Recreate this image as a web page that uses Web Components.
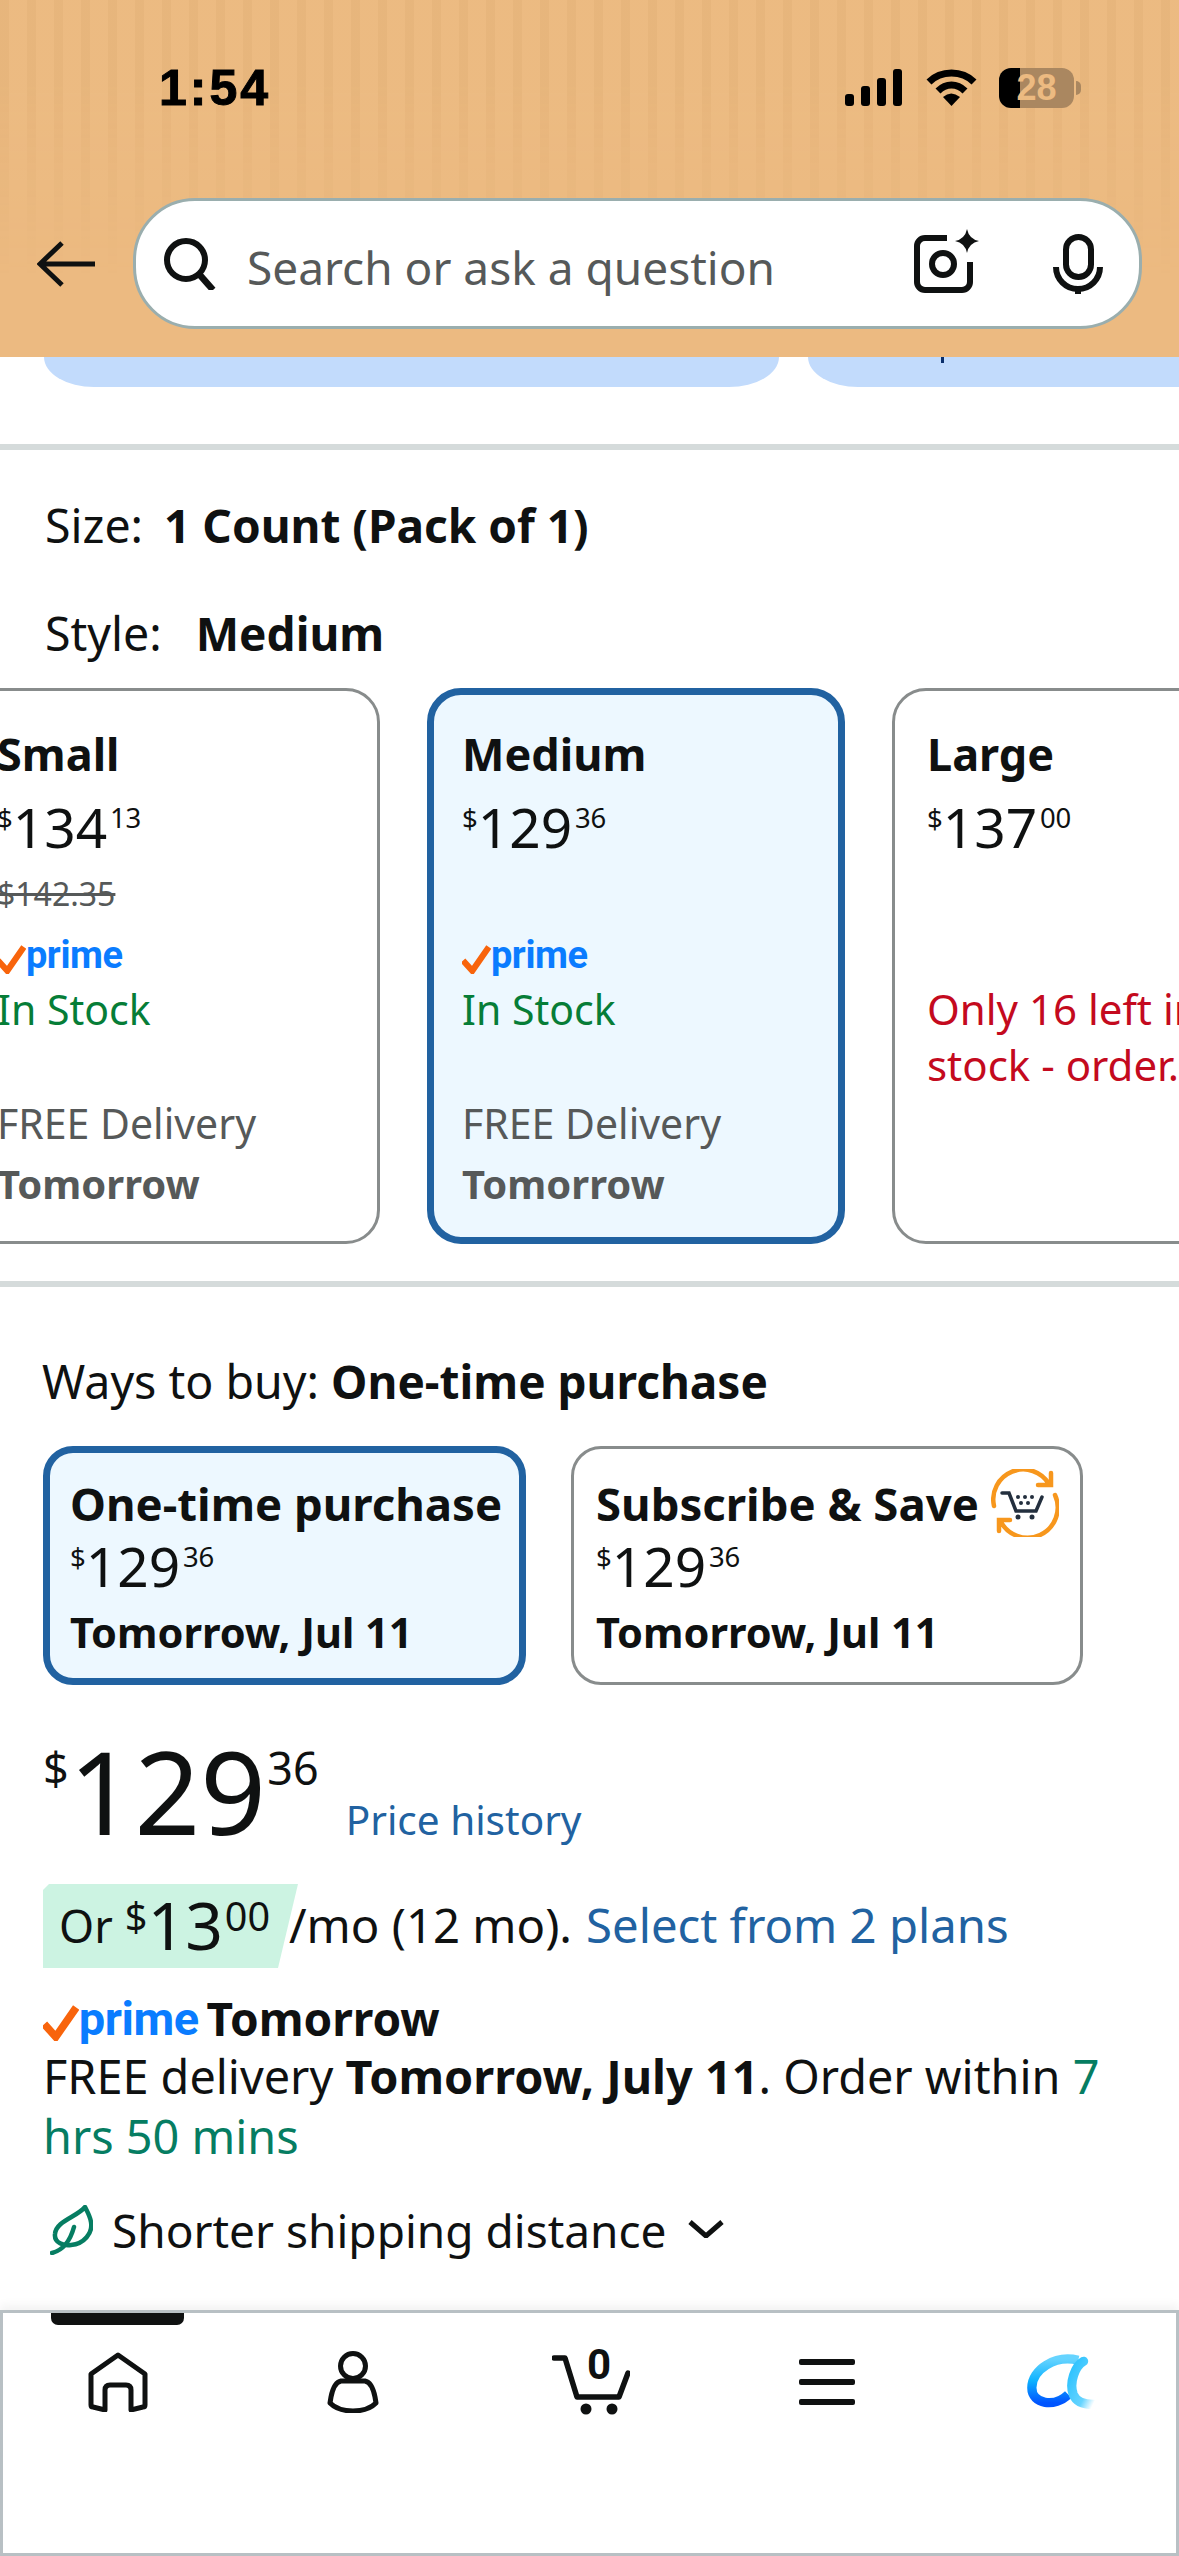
<!DOCTYPE html>
<html lang="en">
<head>
<meta charset="utf-8">
<title>Product options</title>
<style>
html,body{margin:0;padding:0;background:#fff}
body{width:1179px;height:2556px;overflow:hidden;display:flex;flex-direction:column;font-family:"Noto Sans",Roboto,sans-serif;color:#0f1111}
</style>
</head>
<body>
<app-header></app-header>
<pill-strip></pill-strip>
<section-rule></section-rule>
<style-picker></style-picker>
<section-rule></section-rule>
<buy-box></buy-box>
<bottom-nav></bottom-nav>

<script>
// price with small $ and cents
class PriceTag extends HTMLElement{
    static get observedAttributes(){return ["dollars","cents"]}
    constructor(){
        super();
        this.attachShadow({mode:"open"});
        this.shadowRoot.innerHTML=`
        <style>
        :host{display:inline-block;font-size:var(--price-size,55px);line-height:1;white-space:nowrap}
        .s,.c{font-size:calc(1em * var(--sup,.5));line-height:0;vertical-align:var(--raise,.7em)}
        .c{margin-left:var(--cents-gap,.1em)}
        </style>
        <span class="s">$</span><span class="d"></span><span class="c"></span>`;
    }
    attributeChangedCallback(name,old,val){
        this.shadowRoot.querySelector(name=="dollars"?".d":".c").textContent=val;
    }
}
customElements.define("price-tag",PriceTag);

class PrimeMark extends HTMLElement{
    constructor(){
        super();
        this.attachShadow({mode:"open"});
        this.shadowRoot.innerHTML=`
        <style>
        :host{display:inline-flex;align-items:center;font-size:var(--prime-size,38px);line-height:1;font-family:Roboto,sans-serif}
        svg{width:.76em;height:.76em;margin-top:.22em;flex:none}
        span{color:#0a7cff;font-weight:700;letter-spacing:-.01em}
        </style>
        <svg viewBox="0 0 28 28"><path d="M1 15l9 10L26 2" fill="none" stroke="#f8640c" stroke-width="6"/></svg><span>prime</span>`;
    }
}
customElements.define("prime-mark",PrimeMark);

class AppHeader extends HTMLElement{
    constructor(){
        super();
        this.attachShadow({mode:"open"});
        this.shadowRoot.innerHTML=`
        <style>
        :host{display:block;height:357px;flex:none;background:#ecba81;position:relative;overflow:hidden}
        .stripes{position:absolute;inset:0 0 80px 0;background:repeating-linear-gradient(90deg,rgba(190,140,80,.09) 0 9px,rgba(255,220,170,.04) 9px 27px);-webkit-mask-image:linear-gradient(#000 30%,transparent);mask-image:linear-gradient(#000 30%,transparent)}
        .status{position:relative;height:67px;padding-top:54px;display:flex;align-items:center}
        .time{margin-left:159px;font:700 50px/40px "Liberation Sans",sans-serif;letter-spacing:3px;color:#000;-webkit-text-stroke:1px #000}
        .icons{margin-left:auto;margin-right:98px;display:flex;align-items:center}
        .signal{width:58px;height:37px}
        .wifi{width:51px;height:37px;margin-left:23px}
        .batt{position:relative;margin-left:22px;width:75px;height:40px;border-radius:12px;overflow:hidden;background:linear-gradient(90deg,#000 21px,#aa8760 21px);text-align:center;font:700 36px/40px "Liberation Sans",sans-serif;color:#ecba81}
        .nub{width:5px;height:14px;margin-left:2px;background:#aa8760;border-radius:0 7px 7px 0}
        .bar{position:relative;display:flex;align-items:center;margin-top:77px;height:131px}
        .back{width:58px;height:46px;margin-left:37px;flex:none}
        .field{margin-left:38px;width:1009px;height:131px;box-sizing:border-box;background:#fff;border:3px solid #9aaeae;border-radius:62px;display:flex;align-items:center}
        .mag{width:54px;height:52px;margin-left:27px;flex:none}
        .ph{margin-left:30px;font-size:46px;color:#565959;flex:1;padding-top:6px}
        .cam{width:66px;height:66px;flex:none;margin-bottom:4px}
        .mic{width:50px;height:60px;flex:none;margin-left:73px;margin-right:36px}
        </style>
        <div class="stripes"></div>
        <div class="status">
          <div class="time">1:54</div>
          <div class="icons">
            <svg class="signal" viewBox="0 0 58 37"><rect x="0" y="25" width="9" height="12" rx="3"/><rect x="16" y="17" width="9" height="20" rx="3"/><rect x="32" y="9" width="9" height="28" rx="3"/><rect x="48" y="0" width="9" height="37" rx="3"/></svg>
            <svg class="wifi" viewBox="0 0 51 37"><path d="M3 13C15 1 36 1 48 13" fill="none" stroke="#000" stroke-width="7"/><path d="M12 22C20 14 31 14 39 22" fill="none" stroke="#000" stroke-width="7"/><path d="M17 28Q25 21 34 28L25.500 37Z"/></svg>
            <div class="batt">28</div><div class="nub"></div>
          </div>
        </div>
        <div class="bar">
          <svg class="back" viewBox="0 0 58 46"><path d="M25 2L3 23l22 21M3 23h55" fill="none" stroke="#0f1111" stroke-width="5"/></svg>
          <div class="field">
            <svg class="mag" viewBox="0 0 54 52"><circle cx="23" cy="22" r="19" fill="none" stroke="#0f1111" stroke-width="6"/><path d="M36 36l14 16" stroke="#0f1111" stroke-width="6.500"/></svg>
            <div class="ph">Search or ask a question</div>
            <svg class="cam" viewBox="0 0 66 66"><path d="M33 9H11a8 8 0 0 0-8 8V53a8 8 0 0 0 8 8H48a8 8 0 0 0 8-8V33" fill="none" stroke="#0f1111" stroke-width="6"/><circle cx="29" cy="35" r="11" fill="none" stroke="#0f1111" stroke-width="6"/><path d="M53 0Q55 10 65 12 55 14 53 24 51 14 41 12 51 10 53 0Z" fill="#0f1111"/></svg>
            <svg class="mic" viewBox="0 0 50 60"><rect x="13" y="3" width="25" height="40" rx="12.500" fill="none" stroke="#0f1111" stroke-width="6"/><path d="M3 33a22 22 0 0 0 44 0" fill="none" stroke="#0f1111" stroke-width="6"/><rect x="22" y="54" width="6" height="6" fill="#0f1111"/></svg>
          </div>
        </div>`;
    }
}
customElements.define("app-header",AppHeader);

class PillStrip extends HTMLElement{
    constructor(){
        super();
        this.attachShadow({mode:"open"});
        this.shadowRoot.innerHTML=`
        <style>
        :host{display:flex;flex:none;height:30px;margin-bottom:57px;gap:29px;padding-left:44px;overflow:hidden}
        .p{flex:none;width:735px;background:#c2dbfc;border-radius:0 0 50px 50px / 0 0 30px 30px;position:relative}
        .t{position:absolute;left:133px;top:0;width:3px;height:6px;background:#0b2f6b}
        </style>
        <div class="p"></div><div class="p"><div class="t"></div></div>`;
    }
}
customElements.define("pill-strip",PillStrip);

class SectionRule extends HTMLElement{
    constructor(){
        super();
        this.attachShadow({mode:"open"});
        this.shadowRoot.innerHTML=`<style>:host{display:block;flex:none;height:6px;background:#d5dbdb}</style>`;
    }
}
customElements.define("section-rule",SectionRule);

class StyleCard extends HTMLElement{
    constructor(){
        super();
        this.attachShadow({mode:"open"});
        this.shadowRoot.innerHTML=`
        <style>
        :host{display:grid;flex:none;width:418px;height:556px;box-sizing:border-box;border:3px solid #888c8c;border-radius:34px;padding:24px 0 0 32px;
          grid-template-rows:77px 69px 64px 57px 53px 58px 60px 60px;align-items:center;background:#fff;font-size:41px;white-space:nowrap}
        :host([selected]){border:7px solid #2162a1;background:#edf8ff;padding:20px 0 0 28px}
        .title{font-weight:700;font-size:45px}
        .price{padding-top:5px}
        .was{font-size:32px;color:#565959;text-decoration:line-through}
        .pr{padding-top:9px}
        .ok{color:#067d37}
        .low{color:#c40a1e;font-size:42px}
        .free{color:#565959}
        .when{color:#565959;font-weight:700;font-size:40px}
        </style>
        <div class="title"></div>
        <div class="price"><price-tag></price-tag></div>
        <div class="was"></div>
        <div class="pr"><prime-mark></prime-mark></div>
        <div class="st1"></div>
        <div class="st2"></div>
        <div class="free">FREE Delivery</div>
        <div class="when">Tomorrow</div>`;
    }
    connectedCallback(){
        const r=this.shadowRoot;
        r.querySelector(".title").textContent=this.getAttribute("name");
        const p=r.querySelector("price-tag");
        p.setAttribute("dollars",this.getAttribute("dollars"));
        p.setAttribute("cents",this.getAttribute("cents"));
        r.querySelector(".was").textContent=this.getAttribute("was")||"";
        if(this.hasAttribute("low")){
            r.querySelector(".pr").innerHTML="";
            const l=this.getAttribute("low").split("|");
            r.querySelector(".st1").textContent=l[0];
            r.querySelector(".st2").textContent=l[1];
            r.querySelector(".st1").className="low";
            r.querySelector(".st2").className="low";
            r.querySelector(".free").textContent="";
            r.querySelector(".when").textContent="";
        }else{
            r.querySelector(".st1").textContent="In Stock";
            r.querySelector(".st1").className="ok";
        }
    }
}
customElements.define("style-card",StyleCard);

class StylePicker extends HTMLElement{
    constructor(){
        super();
        this.attachShadow({mode:"open"});
        this.shadowRoot.innerHTML=`
        <style>
        :host{display:block;flex:none;font-size:46.500px;overflow:hidden;padding:45px 0 37px}
        .row{height:60px;line-height:60px;padding-left:45px;white-space:nowrap}
        .row + .row{margin-top:48px}
        b{font-weight:700;font-size:46px}
        .a{margin-left:21px}
        .b{margin-left:34px}
        .cards{display:flex;gap:47px;margin:25px 0 0 -38px}
        </style>
        <div class="row">Size:<b class="a">1 Count (Pack of 1)</b></div>
        <div class="row">Style:<b class="b">Medium</b></div>
        <div class="cards">
          <style-card name="Small" dollars="134" cents="13" was="$142.35"></style-card>
          <style-card selected name="Medium" dollars="129" cents="36"></style-card>
          <style-card name="Large" dollars="137" cents="00" low="Only 16 left in|stock - order."></style-card>
        </div>`;
    }
}
customElements.define("style-picker",StylePicker);

class BuyCard extends HTMLElement{
    constructor(){
        super();
        this.attachShadow({mode:"open"});
        this.shadowRoot.innerHTML=`
        <style>
        :host{display:grid;flex:none;box-sizing:border-box;height:239px;border:3px solid #888c8c;border-radius:30px;padding:0 0 0 22px;background:#fff}
        :host([selected]){border:7px solid #2162a1;background:#edf8ff;padding-left:20px}
        .in{display:grid;grid-template-rows:62px 68px 60px;align-items:center;margin-top:23px;white-space:nowrap}
        :host([selected]) .in{margin-top:19px}
        .t{font-weight:700;font-size:45.500px;display:flex;align-items:center}
        .d{font-weight:700;font-size:41.500px}
        </style>
        <div class="in">
          <div class="t"><span class="name"></span><slot></slot></div>
          <div><price-tag dollars="129" cents="36"></price-tag></div>
          <div class="d">Tomorrow, Jul 11</div>
        </div>`;
    }
    connectedCallback(){
        this.shadowRoot.querySelector(".name").textContent=this.getAttribute("name");
    }
}
customElements.define("buy-card",BuyCard);

class BuyBox extends HTMLElement{
    constructor(){
        super();
        this.attachShadow({mode:"open"});
        this.shadowRoot.innerHTML=`
        <style>
        :host{display:block;flex:none;padding:64px 0 0 43px;font-size:47.300px}
        .ways{height:60px;line-height:60px;font-size:46.500px;margin-left:-1px}
        b{font-weight:700}
        .ways b{font-size:46px}
        .opts{display:flex;gap:45px;margin-top:35px}
        buy-card:first-child{width:483px}
        buy-card:last-child{width:512px}
        .sns{width:68px;height:68px;margin-left:12px}
        .price{display:flex;align-items:baseline;margin-top:46px;--price-size:115px;--sup:.39;--raise:1.12em;--cents-gap:.03em;height:124px;line-height:120px}
        .hist{margin-left:27px;font-size:40.500px;color:#2162a1}
        price-tag.big{line-height:120px}
        .mo{display:flex;align-items:baseline;margin-top:29px;white-space:nowrap}
        .mint{--price-size:66px;--sup:.6;--raise:.48em;--cents-gap:.05em;box-sizing:border-box;width:255px;background:#ccf3e2;height:84px;line-height:80px;padding:0 0 4px 16px;clip-path:polygon(0 6px,6px 0,255px 0,235px 100%,0 100%);margin-right:-9px;display:flex;align-items:baseline;gap:12px;font-size:45px}
        .mint price-tag{transform:translateY(7px)}
        a{color:#2162a1;text-decoration:none;margin-left:14px}
        .pt{display:flex;align-items:center;height:58px;margin-top:21px;font-weight:700;font-size:46px;--prime-size:47px;gap:8px}
        .txt{line-height:60px;width:1100px;margin-top:-1px;font-size:46.800px}
        .g{color:#067d62}
        .ship{display:flex;align-items:center;height:60px;margin-top:34px;margin-left:7px;font-size:46px}
        .leaf{width:43px;height:50px;margin-right:19px;flex:none}
        .chev{width:36px;height:18px;margin-left:21px;margin-bottom:2px}
        </style>
        <div class="ways">Ways to buy: <b>One-time purchase</b></div>
        <div class="opts">
          <buy-card selected name="One-time purchase"></buy-card>
          <buy-card name="Subscribe &amp; Save">
            <svg class="sns" viewBox="0 0 68 68">
              <path d="M3 37A30 30 0 0 1 58 15M47 16H60V4" fill="none" stroke="#f7971d" stroke-width="4.500" stroke-linecap="round"/>
              <path d="M64 26A30 30 0 0 1 9 51M19 51H8V62" fill="none" stroke="#f7971d" stroke-width="4.500" stroke-linecap="round"/>
              <path d="M11 24h7l7 18h20l6-14" fill="none" stroke="#232f3e" stroke-width="3.500" stroke-linecap="round"/>
              <g fill="#232f3e"><circle cx="27" cy="48" r="2.500"/><circle cx="41" cy="48" r="2.500"/><circle cx="27" cy="28" r="2"/><circle cx="34" cy="28" r="2"/><circle cx="41" cy="28" r="2"/><circle cx="30" cy="34" r="2"/><circle cx="37" cy="34" r="2"/></g>
            </svg>
          </buy-card>
        </div>
        <div class="price"><price-tag class="big" dollars="129" cents="36"></price-tag><span class="hist">Price history</span></div>
        <div class="mo"><div class="mint">Or <price-tag dollars="13" cents="00"></price-tag></div><span>/mo (12 mo).</span><a>Select from 2 plans</a></div>
        <div class="pt"><prime-mark></prime-mark><span>Tomorrow</span></div>
        <div class="txt">FREE delivery <b>Tomorrow, July 11</b>. Order within <span class="g">7 hrs 50 mins</span></div>
        <div class="ship">
          <svg class="leaf" viewBox="0 0 43 50"><path d="M35 2C27 12 6 16 5 29 4 38 14 41 21 40 34 39 43 28 41 17 40 11 37 6 35 2Z" fill="none" stroke="#067d62" stroke-width="4.500" stroke-linejoin="round"/><path d="M2 48C10 46 19 40 24 22" fill="none" stroke="#067d62" stroke-width="4.500" stroke-linecap="round"/></svg>
          <span>Shorter shipping distance</span>
          <svg class="chev" viewBox="0 0 36 18"><path d="M2 2l16 14L34 2" fill="none" stroke="#0f1111" stroke-width="5"/></svg>
        </div>`;
    }
}
customElements.define("buy-box",BuyBox);

class BottomNav extends HTMLElement{
    constructor(){
        super();
        this.attachShadow({mode:"open"});
        this.shadowRoot.innerHTML=`
        <style>
        :host{display:grid;grid-template-columns:230px 240px 236px 235px 1fr;margin-top:auto;height:246px;box-sizing:border-box;border:3px solid #b8c0c4;background:#fff;position:relative;box-shadow:0 -5px 9px rgba(0,0,0,.05)}
        .tab{position:absolute;left:48px;top:0;width:133px;height:12px;background:#0f1111;border-radius:0 0 7px 7px}
        .c{display:flex;justify-content:center;align-items:center;height:138px}
        </style>
        <div class="tab"></div>
        <div class="c"><svg width="60" height="60" viewBox="0 0 60 60"><path d="M30 3L57 22V53Q57 55 55 55L43 58V38Q43 33 38 33H22Q17 33 17 38V58L5 55Q3 55 3 53V22Z" fill="none" stroke="#0f1111" stroke-width="5" stroke-linejoin="round"/></svg></div>
        <div class="c"><svg width="54" height="62" viewBox="0 0 54 62"><circle cx="27" cy="15" r="12.500" fill="none" stroke="#0f1111" stroke-width="5"/><path d="M15 30H39C44 31 47 36 49 46L50 52C44 58 36 60 27 60 18 60 10 58 4 52L5 46C7 36 10 31 15 30Z" fill="none" stroke="#0f1111" stroke-width="5" stroke-linejoin="round"/></svg></div>
        <div class="c"><svg width="78" height="68" viewBox="0 0 78 68"><path d="M2 10H13L25 49H67L76 25" fill="none" stroke="#0f1111" stroke-width="5.500" stroke-linecap="round" stroke-linejoin="round"/><circle cx="34" cy="61" r="5.500" fill="#0f1111"/><circle cx="60" cy="61" r="5.500" fill="#0f1111"/><text x="47" y="31" text-anchor="middle" font-family="Roboto,sans-serif" font-weight="700" font-size="42" fill="#0f1111">0</text></svg></div>
        <div class="c"><svg width="56" height="46" viewBox="0 0 56 46"><rect y="0" width="56" height="6" rx="2" fill="#0f1111"/><rect y="20" width="56" height="6" rx="2" fill="#0f1111"/><rect y="40" width="56" height="6" rx="2" fill="#0f1111"/></svg></div>
        <div class="c"><svg width="70" height="58" viewBox="140 100 210 175">
          <defs>
            <linearGradient id="ra" x1="0" y1="0" x2="0" y2="1"><stop offset="0" stop-color="#66d4ff"/><stop offset=".5" stop-color="#0db2ff"/><stop offset="1" stop-color="#0055ff"/></linearGradient>
            <linearGradient id="rb" x1="0" y1="0" x2="1" y2="1"><stop offset="0" stop-color="#29c1ff"/><stop offset=".7" stop-color="#66d4ff"/><stop offset="1" stop-color="#ffffff"/></linearGradient>
          </defs>
          <path d="M300 122C230 105 160 150 160 205 160 255 230 265 270 225" fill="none" stroke="url(#ra)" stroke-width="28"/>
          <path d="M316 125C290 140 272 190 285 225 295 250 320 255 345 255" fill="none" stroke="url(#rb)" stroke-width="28" stroke-linecap="round"/>
        </svg></div>`;
    }
}
customElements.define("bottom-nav",BottomNav);
</script>
</body>
</html>
